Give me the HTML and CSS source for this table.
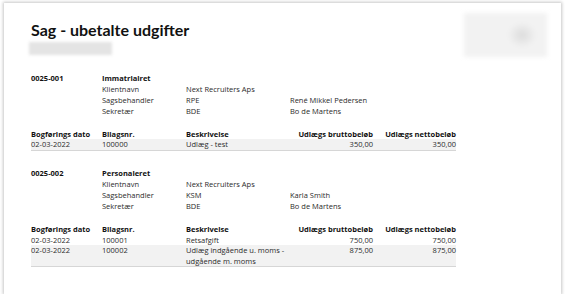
FILE: index.html
```html
<!DOCTYPE html>
<html lang="da">
<head>
<meta charset="utf-8">
<title>Sag - ubetalte udgifter</title>
<link rel="stylesheet" href="styles.css">
</head>
<body>
<div class="page">
  <div class="header">
    <div class="titleblock">
      <h1 class="title">Sag - ubetalte udgifter</h1>
      <div class="blur-sub"></div>
    </div>
    <div class="blur-logo"></div>
  </div>

  <section class="case">
    <div class="case-info">
      <div class="case-no">0025-001</div>
      <div class="case-name">Immatrialret</div>
      <div class="lbl">Klientnavn</div><div class="val">Next Recruiters Aps</div><div></div>
      <div class="lbl">Sagsbehandler</div><div class="val">RPE</div><div>René Mikkel Pedersen</div>
      <div class="lbl">Sekretær</div><div class="val">BDE</div><div>Bo de Martens</div>
    </div>
    <table class="tbl">
      <thead>
        <tr><th class="c1">Bogførings dato</th><th class="c2">Bilagsnr.</th><th class="c3">Beskrivelse</th><th class="c4 num">Udlægs bruttobeløb</th><th class="c5 num">Udlægs nettobeløb</th></tr>
      </thead>
      <tbody>
        <tr class="alt"><td>02-03-2022</td><td>100000</td><td>Udlæg - test</td><td class="num">350,00</td><td class="num">350,00</td></tr>
      </tbody>
    </table>
  </section>

  <section class="case">
    <div class="case-info">
      <div class="case-no">0025-002</div>
      <div class="case-name">Personaleret</div>
      <div class="lbl">Klientnavn</div><div class="val">Next Recruiters Aps</div><div></div>
      <div class="lbl">Sagsbehandler</div><div class="val">KSM</div><div>Karla Smith</div>
      <div class="lbl">Sekretær</div><div class="val">BDE</div><div>Bo de Martens</div>
    </div>
    <table class="tbl">
      <thead>
        <tr><th class="c1">Bogførings dato</th><th class="c2">Bilagsnr.</th><th class="c3">Beskrivelse</th><th class="c4 num">Udlægs bruttobeløb</th><th class="c5 num">Udlægs nettobeløb</th></tr>
      </thead>
      <tbody>
        <tr><td>02-03-2022</td><td>100001</td><td>Retsafgift</td><td class="num">750,00</td><td class="num">750,00</td></tr>
        <tr class="alt"><td>02-03-2022</td><td>100002</td><td>Udlæg indgående u. moms - udgående m. moms</td><td class="num">875,00</td><td class="num">875,00</td></tr>
      </tbody>
    </table>
  </section>
</div>
</body>
</html>
```

FILE: styles.css
```css
html, body {
  margin: 0;
  padding: 0;
  background: #ffffff;
}
body {
  font-family: "Open Sans", "Noto Sans", sans-serif;
  color: #2b2b2b;
  font-size: 7.5px;
}
.page {
  box-sizing: border-box;
  width: 557px;
  height: 291px;
  margin: 3px 0 0 4px;
  background: #fff;
  box-shadow: 0 0 3px 1px rgba(0,0,0,0.22);
  padding: 10px 13px 0 27px;
}
.header {
  display: flex;
  justify-content: space-between;
  align-items: flex-start;
  height: 46px;
}
.title {
  margin: 7px 0 0 0;
  font-family: "Lato", "Open Sans", sans-serif;
  font-size: 16px;
  line-height: 20px;
  font-weight: 700;
  color: #111;
}
.blur-sub {
  width: 83px;
  height: 13px;
  margin: 2px 0 0 -2px;
  background: #e4e4e4;
  filter: blur(1.5px);
}
.blur-logo {
  width: 83px;
  height: 44px;
  margin-right: 1px;
  background: radial-gradient(ellipse 18px 16px at 70% 50%, #dcdcdc, #f2f2f2 80%);
  filter: blur(2px);
}
.case {
  margin-top: 13.5px;
}
.case + .case {
  margin-top: 17.5px;
}
.case-info {
  display: grid;
  grid-template-columns: 71px 84px 104px auto;
  line-height: 11px;
}
.case-no, .case-name {
  font-weight: 700;
  color: #111;
}
.case-name {
  grid-column: 2 / 5;
}
.lbl {
  grid-column: 2;
}
.tbl {
  margin-top: 12px;
  border-collapse: collapse;
  width: 425px;
  table-layout: fixed;
}
.tbl th, .tbl td {
  padding: 0;
  text-align: left;
  vertical-align: top;
  line-height: 10.5px;
  font-size: 7.5px;
}
.tbl th {
  font-weight: 700;
  color: #111;
  white-space: nowrap;
}
.tbl .c1 { width: 71px; }
.tbl .c2 { width: 84px; }
.tbl .c3 { width: 104px; }
.tbl .c4 { width: 83px; }
.tbl .c5 { width: 83px; }
.tbl .num { text-align: right; }
.tbl tbody tr:last-child td {
  border-bottom: 1.5px solid #d6d6d6;
}
.tbl tr.alt td {
  background: #f2f2f2;
}
```
